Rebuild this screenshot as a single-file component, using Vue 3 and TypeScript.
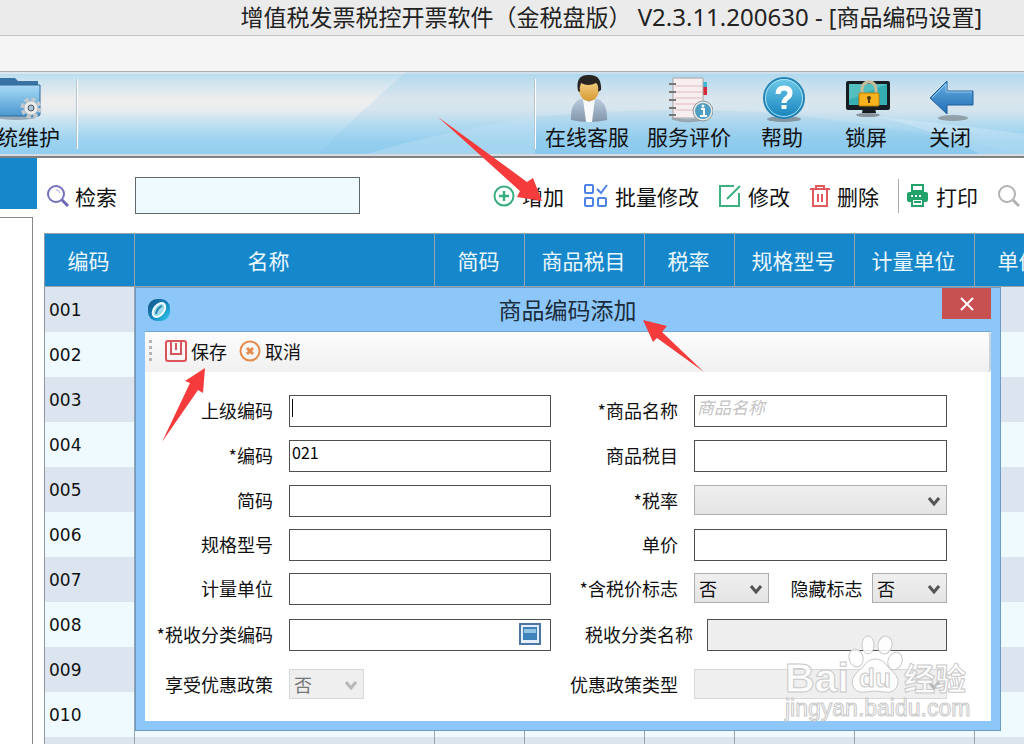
<script setup lang="ts">
import { ref } from 'vue'

interface Column {
  title: string
  width: number
}

const columns: Column[] = [
  { title: '编码', width: 90 },
  { title: '名称', width: 300 },
  { title: '简码', width: 90 },
  { title: '商品税目', width: 120 },
  { title: '税率', width: 90 },
  { title: '规格型号', width: 120 },
  { title: '计量单位', width: 120 },
  { title: '单价', width: 90 },
]
const codes: string[] = Array.from({ length: 11 }, (_, i) => String(i + 1).padStart(3, '0'))

const keyword = ref('')
const parentCode = ref('')
const code = ref('021')
const shortCode = ref('')
const spec = ref('')
const unit = ref('')
const taxClass = ref('')
const name = ref('')
const taxItem = ref('')
const price = ref('')
</script>

<template>
  <div class="app">
    <header class="titlebar">
      <h1>增值税发票税控开票软件（金税盘版）<span class="version"> V2.3.11.200630 - </span>[商品编码设置]</h1>
    </header>
    <div class="menubar"></div>

    <nav class="ribbon">
      <svg class="swoosh" viewBox="0 0 1024 82" preserveAspectRatio="none" aria-hidden="true">
        <path d="M406 0 Q360 40 318 82 H1024 V0Z" fill="#7fc0e8" opacity=".18" />
        <path d="M366 82 Q440 60 535 45 V82Z" fill="#fff" opacity=".25" />
        <path d="M366 82 Q440 60 535 45 Q640 34 760 40 Q880 50 1024 82Z" fill="#5fb2e6" opacity=".12" />
        <path d="M880 45 Q950 52 1024 62 V82 H980 Q940 60 880 45Z" fill="#fff" opacity=".2" />
      </svg>
      <button class="tool maintain" type="button">
        <svg width="48" height="46" viewBox="0 0 48 46" aria-hidden="true">
          <defs>
            <linearGradient id="folder" x1="0" y1="0" x2="0" y2="1">
              <stop offset="0" stop-color="#a9daf6" /><stop offset="1" stop-color="#4a98d0" />
            </linearGradient>
          </defs>
          <ellipse cx="22" cy="42" rx="20" ry="3" fill="#567" opacity=".45" />
          <path d="M1 3h20l3 3h20v33H1z" fill="#3873a3" />
          <path d="M4 10h42v29q0 2-2 2H4z" fill="url(#folder)" stroke="#2e6a9b" />
          <circle cx="37" cy="33" r="8" fill="none" stroke="#c3c9ce" stroke-width="5" stroke-dasharray="4 2.28" />
          <circle cx="37" cy="33" r="7" fill="#e9ebed" stroke="#b4babf" />
          <circle cx="37" cy="33" r="3" fill="#a9c4d9" stroke="#555" />
        </svg>
        <span>系统维护</span>
      </button>
      <i class="divider"></i>
      <div class="ribbon-right">
        <i class="divider"></i>
        <button class="tool" type="button">
          <svg width="48" height="50" viewBox="0 0 48 50" aria-hidden="true">
            <defs>
              <linearGradient id="suit" x1="0" y1="0" x2="0" y2="1">
                <stop offset="0" stop-color="#b9cbdc" /><stop offset="1" stop-color="#8194a9" />
              </linearGradient>
              <linearGradient id="skin" x1="0" y1="0" x2="0" y2="1">
                <stop offset="0" stop-color="#f8d58c" /><stop offset="1" stop-color="#d79a35" />
              </linearGradient>
            </defs>
            <path d="M8 47 Q7 30 17 26 H35 Q45 30 44 47 Q26 51 8 47Z" fill="url(#suit)" />
            <path d="M20 26 L26 29 L32 26 L29 49 H23Z" fill="#f7f9fb" />
            <ellipse cx="26" cy="17" rx="10" ry="11" fill="url(#skin)" />
            <path d="M15 18 Q12 2 25 2 Q39 1 38 17 L35 19 Q36 12 33 10 Q25 14 18 10 Q16 15 17 19Z" fill="#282421" />
          </svg>
          <span>在线客服</span>
        </button>
        <button class="tool" type="button">
          <svg width="48" height="50" viewBox="0 0 48 50" aria-hidden="true">
            <path d="M7 45 Q22 50 38 46" stroke="#888" stroke-width="3" fill="none" opacity=".6" />
            <path d="M38 9h4v5h-4z" fill="#3db8d5" /><path d="M38 14h4v8h-4z" fill="#d5283a" />
            <path d="M8 5h30v40H8z" fill="#f7efef" stroke="#a8a1a2" />
            <path d="M10 13h27M10 19h27M10 25h27M10 31h27M10 37h27" stroke="#dfb9bb" stroke-width="1" />
            <path d="M4 11h7M4 19h7M4 27h7M4 35h7M4 42h7" stroke="#777" stroke-width="2" />
            <circle cx="38" cy="38" r="9" fill="#4f9ec4" stroke="#e8e8e0" stroke-width="2" />
            <circle cx="38" cy="38" r="10" fill="none" stroke="#8b9aa0" />
            <path d="M36 36h3v7M35 43h7" stroke="#fff" stroke-width="2" fill="none" /><circle cx="38" cy="33" r="1.500" fill="#fff" />
          </svg>
          <span>服务评价</span>
        </button>
        <button class="tool" type="button">
          <svg width="48" height="50" viewBox="0 0 48 50" aria-hidden="true">
            <defs>
              <linearGradient id="help" x1="0" y1="0" x2="0" y2="1">
                <stop offset="0" stop-color="#70cbea" /><stop offset="1" stop-color="#1583bd" />
              </linearGradient>
            </defs>
            <ellipse cx="26" cy="46" rx="17" ry="3" fill="#555" opacity=".5" />
            <circle cx="26" cy="25" r="20" fill="url(#help)" stroke="#2383b3" stroke-width="2" />
            <circle cx="26" cy="25" r="18.500" fill="none" stroke="#a9e3f5" />
            <path d="M20 21 Q20 15 26 15 Q32 15 32 20 Q32 23 29 25 Q26 27 26 30" fill="none" stroke="#fff" stroke-width="5" />
            <path d="M23.500 32h5v4h-5z" fill="#fff" />
          </svg>
          <span>帮助</span>
        </button>
        <button class="tool" type="button">
          <svg width="48" height="50" viewBox="0 0 48 50" aria-hidden="true">
            <ellipse cx="26" cy="42" rx="12" ry="2" fill="#444" opacity=".5" />
            <path d="M21 35h12l1 5H20z" fill="#161b20" />
            <rect x="4" y="8" width="44" height="29" rx="2" fill="#171d22" />
            <path d="M7 11h38v21H7z" fill="#35aeb1" />
            <path d="M7 11h38L7 27z" fill="#72cfce" opacity=".5" />
            <path d="M20 21v-4q0-8 7-8t7 8v4" fill="none" stroke="#c6bd98" stroke-width="3" />
            <rect x="17" y="20" width="20" height="13" rx="1" fill="#f7b31d" stroke="#b87c0b" />
            <circle cx="27" cy="25" r="2" fill="#4f3a09" /><path d="M26 25h2v5h-2z" fill="#4f3a09" />
          </svg>
          <span>锁屏</span>
        </button>
        <button class="tool" type="button">
          <svg width="48" height="50" viewBox="0 0 48 50" aria-hidden="true">
            <defs>
              <linearGradient id="back" x1="0" y1="0" x2="0" y2="1">
                <stop offset="0" stop-color="#65ade3" /><stop offset="1" stop-color="#216eb4" />
              </linearGradient>
            </defs>
            <ellipse cx="27" cy="45" rx="15" ry="3" fill="#555" opacity=".45" />
            <path d="M4 25 L21 8 V18 H47 V32 H21 V41Z" fill="url(#back)" stroke="#205d9a" stroke-width="1" />
            <path d="M6 25 L20 11 V19 H46" fill="none" stroke="#93c8ee" />
          </svg>
          <span>关闭</span>
        </button>
      </div>
    </nav>

    <div class="workspace">
      <aside class="side">
        <div class="side-head"></div>
        <div class="side-tree"></div>
      </aside>
      <main class="main">
        <div class="toolbar">
          <label class="search-label" for="keyword">
            <svg width="24" height="24" viewBox="0 0 24 24" aria-hidden="true">
              <circle cx="10" cy="10" r="8" fill="none" stroke="#7470bd" stroke-width="2" />
              <path d="M10 6q3 0 4 3" fill="none" stroke="#a5a2dc" />
              <path d="M16 16l6 6" stroke="#6c68b3" stroke-width="3" />
            </svg>
            检索
          </label>
          <input id="keyword" v-model="keyword" class="search" type="text" />
          <div class="actions">
            <button type="button">
              <svg width="24" height="24" viewBox="0 0 24 24" fill="none" stroke="#39ae7e" aria-hidden="true">
                <circle cx="12" cy="12" r="9.500" stroke-width="2" /><path d="M12 7v10M7 12h10" stroke-width="2.500" />
              </svg>增加
            </button>
            <button type="button">
              <svg width="26" height="24" viewBox="0 0 26 24" fill="none" stroke="#4b83e8" stroke-width="2" aria-hidden="true">
                <rect x="2" y="1" width="8" height="8" rx="1" /><rect x="2" y="14" width="8" height="8" rx="1" />
                <rect x="15" y="14" width="8" height="8" rx="1" /><path d="M14 5l4 4 6-8" />
              </svg>批量修改
            </button>
            <button type="button">
              <svg width="24" height="24" viewBox="0 0 24 24" fill="none" stroke="#3eb181" stroke-width="2" aria-hidden="true">
                <path d="M16 2H2v20h19V9M9 15L22 2" />
              </svg>修改
            </button>
            <button type="button">
              <svg width="22" height="24" viewBox="0 0 22 24" fill="none" stroke="#e15a5f" stroke-width="2" aria-hidden="true">
                <path d="M1 5h20M7 5V2h8v3M4 5v17h14V5M9 10v8M13 10v8" />
              </svg>删除
            </button>
            <i class="rule"></i>
            <button type="button">
              <svg width="24" height="24" viewBox="0 0 24 24" aria-hidden="true">
                <path d="M6 1h11v6H6z" fill="none" stroke="#23a36a" stroke-width="2" />
                <rect x="1" y="8" width="21" height="10" rx="2" fill="#23a36a" />
                <path d="M6 15h11v7H6z" fill="#fff" stroke="#23a36a" stroke-width="2" />
                <path d="M5 12h2M9 12h2M13 12h2" stroke="#fff" stroke-width="2" /><path d="M8 18h7" stroke="#23a36a" stroke-width="2" />
              </svg>打印
            </button>
            <button type="button" aria-label="查找">
              <svg width="24" height="24" viewBox="0 0 24 24" fill="none" stroke="#b2b2b2" aria-hidden="true">
                <circle cx="10" cy="10" r="8" stroke-width="2" /><path d="M16 16l6 6" stroke-width="3" />
              </svg>
            </button>
          </div>
        </div>

        <div class="table-area">
          <table>
            <colgroup>
              <col v-for="c in columns" :key="c.title" :style="{ width: c.width + 'px' }" />
            </colgroup>
            <thead>
              <tr><th v-for="c in columns" :key="c.title" scope="col">{{ c.title }}</th></tr>
            </thead>
            <tbody>
              <tr v-for="row in codes" :key="row">
                <td>{{ row }}</td>
                <td v-for="n in columns.length - 1" :key="n"></td>
              </tr>
            </tbody>
          </table>

          <section class="dialog" role="dialog" aria-labelledby="dialog-title">
            <div class="dialog-head">
              <svg class="logo" width="24" height="24" viewBox="0 0 24 24" aria-hidden="true">
                <defs>
                  <linearGradient id="orb" x1="0" y1="0" x2="1" y2="1">
                    <stop offset="0" stop-color="#174f80" /><stop offset=".6" stop-color="#128fc8" /><stop offset="1" stop-color="#3cd0ed" />
                  </linearGradient>
                </defs>
                <rect x="1" y="1" width="22" height="22" rx="9" fill="url(#orb)" />
                <ellipse cx="12" cy="12" rx="5" ry="8" transform="rotate(38 12 12)" fill="#9edbed" stroke="#f2fcff" stroke-width="2" />
                <path d="M9 16q1-6 6-8" fill="none" stroke="#2887ae" stroke-width="2" />
              </svg>
              <h2 id="dialog-title">商品编码添加</h2>
              <button class="close" type="button" aria-label="关闭窗口">
                <svg width="14" height="14" viewBox="0 0 14 14" aria-hidden="true"><path d="M1 1l12 12M13 1L1 13" stroke="#fff" stroke-width="2" /></svg>
              </button>
            </div>

            <div class="dialog-body">
              <div class="dialog-tools">
                <svg width="4" height="24" viewBox="0 0 4 24" fill="#b4b4bc" aria-hidden="true">
                  <path d="M0 1h3v3H0zM0 7h3v3H0zM0 13h3v3H0zM0 19h3v3H0z" />
                </svg>
                <button type="button">
                  <svg width="22" height="22" viewBox="0 0 22 22" fill="none" stroke="#da545b" stroke-width="2" aria-hidden="true">
                    <path d="M3 1h16q2 0 2 2v16q0 2-2 2H3q-2 0-2-2V3q0-2 2-2zM6 2v12h10V2M11 3v7" />
                  </svg>保存
                </button>
                <button type="button">
                  <svg width="22" height="22" viewBox="0 0 22 22" fill="none" stroke="#e58b4c" aria-hidden="true">
                    <circle cx="11" cy="11" r="9.500" stroke-width="2" /><path d="M8 8l6 6M14 8l-6 6" stroke-width="3" />
                  </svg>取消
                </button>
              </div>

              <form class="form" @submit.prevent>
                <label for="parent">上级编码</label>
                <div class="field caret"><input id="parent" v-model="parentCode" type="text" /></div>
                <label for="name">*商品名称</label>
                <div class="field"><input id="name" v-model="name" type="text" placeholder="商品名称" /></div>

                <label for="code">*编码</label>
                <div class="field"><input id="code" v-model="code" type="text" /></div>
                <label for="taxitem">商品税目</label>
                <div class="field"><input id="taxitem" v-model="taxItem" type="text" /></div>

                <label for="short">简码</label>
                <div class="field"><input id="short" v-model="shortCode" type="text" /></div>
                <label for="rate">*税率</label>
                <div class="field pick">
                  <select id="rate"><option value=""></option></select>
                  <svg width="12" height="9" viewBox="0 0 12 9" aria-hidden="true"><path d="M1 1l5 6 5-6" /></svg>
                </div>

                <label for="spec">规格型号</label>
                <div class="field"><input id="spec" v-model="spec" type="text" /></div>
                <label for="price">单价</label>
                <div class="field"><input id="price" v-model="price" type="text" /></div>

                <label for="unit">计量单位</label>
                <div class="field"><input id="unit" v-model="unit" type="text" /></div>
                <label for="included">*含税价标志</label>
                <div class="pair">
                  <div class="field pick small">
                    <select id="included"><option>否</option><option>是</option></select>
                    <svg width="12" height="9" viewBox="0 0 12 9" aria-hidden="true"><path d="M1 1l5 6 5-6" /></svg>
                  </div>
                  <label for="hidden">隐藏标志</label>
                  <div class="field pick small">
                    <select id="hidden"><option>否</option><option>是</option></select>
                    <svg width="12" height="9" viewBox="0 0 12 9" aria-hidden="true"><path d="M1 1l5 6 5-6" /></svg>
                  </div>
                </div>

                <label for="class">*税收分类编码</label>
                <div class="field">
                  <input id="class" v-model="taxClass" type="text" />
                  <button class="browse" type="button" aria-label="选择税收分类">
                    <svg width="22" height="22" viewBox="0 0 22 22" aria-hidden="true">
                      <rect x="1" y="1" width="20" height="20" fill="#e3f0fb" stroke="#4c76a5" stroke-width="2" />
                      <path d="M4 4h14v13H4z" fill="#3e83b9" /><path d="M5 6h12v4H5z" fill="#91c3e2" />
                    </svg>
                  </button>
                </div>
                <div class="wide">
                  <label for="classname">税收分类名称</label>
                  <div class="field"><input id="classname" type="text" disabled /></div>
                </div>

                <label for="policy">享受优惠政策</label>
                <div class="field pick small">
                  <select id="policy" disabled><option>否</option></select>
                  <svg width="12" height="9" viewBox="0 0 12 9" aria-hidden="true"><path d="M1 1l5 6 5-6" /></svg>
                </div>
                <label for="policytype">优惠政策类型</label>
                <div class="field pick">
                  <select id="policytype" disabled><option value=""></option></select>
                  <svg width="12" height="9" viewBox="0 0 12 9" aria-hidden="true"><path d="M1 1l5 6 5-6" /></svg>
                </div>
              </form>
            </div>
          </section>
        </div>
      </main>
    </div>

    <svg class="marks" width="1024" height="744" viewBox="0 0 1024 744" aria-hidden="true">
      <g fill="#f53b3b">
        <path d="M438 117 L527 182 L533 178 L542 201 L517 197 L520 191Z" />
        <path d="M643 320 L667 326 L662 332 L704 372 L657 338 L653 342Z" />
        <path d="M205 368 L185 381 L190 383 L162 442 L198 390 L203 393Z" />
      </g>
      <g class="watermark" fill="#fff" fill-opacity=".85" stroke="#c9c9c9" stroke-width="1">
        <text x="785" y="692" font-size="41" font-weight="700">Bai</text>
        <ellipse cx="856" cy="658" rx="7" ry="9" transform="rotate(-15 856 658)" />
        <ellipse cx="868" cy="645" rx="6" ry="9" />
        <ellipse cx="885" cy="645" rx="7" ry="9" transform="rotate(12 885 645)" />
        <ellipse cx="895" cy="661" rx="7" ry="9" transform="rotate(20 895 661)" />
        <path d="M875 659 Q883 659 888 667 Q899 676 898 683 Q896 694 884 692 Q875 690 866 692 Q854 694 852 683 Q852 675 863 667 Q868 659 875 659Z" />
        <text x="859" y="687" font-size="26" font-weight="700">du</text>
        <text class="cjk" x="904" y="690" font-size="31" font-weight="700">经验</text>
        <text x="785" y="716" font-size="23">jingyan.baidu.com</text>
      </g>
    </svg>
  </div>
</template>

<style>
body {
  margin: 0;
}
</style>

<style scoped>
.app {
  position: relative;
  display: flex;
  flex-direction: column;
  height: 100vh;
  overflow: hidden;
  background: #fff;
  color: #111;
  font-family: "Noto Sans CJK SC", sans-serif;
  font-size: 21px;
}
.app *,
.app *::before {
  box-sizing: border-box;
}
button {
  border: 0;
  padding: 0;
  background: none;
  color: inherit;
  font: inherit;
  white-space: nowrap;
}
svg {
  flex: none;
}
.titlebar {
  flex: none;
  height: 36px;
  padding-right: 42px;
  border-bottom: 1px solid #c6c6c6;
  background: #ebebeb;
  text-align: right;
}
h1 {
  margin: 0;
  font-family: "Noto Sans", "Noto Sans CJK SC", sans-serif;
  font-size: 23px;
  font-weight: 400;
  line-height: 34px;
  white-space: pre;
  color: #222;
}
.version {
  font-size: 24px;
}
.menubar {
  flex: none;
  height: 36px;
  border-bottom: 1px solid #a9adb0;
  background: #f5f5f5;
}
.ribbon {
  position: relative;
  display: flex;
  flex: none;
  height: 86px;
  border-bottom: 2px solid #828282;
  box-shadow: inset 0 -2px #d5dde2, inset 0 2px #dce7ed;
  background: linear-gradient(#b5dcf0 0, #cfe4ef 10px, #efeeee 28px, #e8ecef 38px, #bfe0f2 52px, #9dd3f0 68px, #92cdf0 84px);
}
.swoosh {
  position: absolute;
  inset: 0;
  width: 100%;
  height: 82px;
}
.divider {
  position: relative;
  flex: none;
  width: 2px;
  height: 70px;
  margin-top: 7px;
  border-left: 1px solid #b4c4cd;
  background: #fff;
}
.ribbon-right {
  position: relative;
  display: flex;
  margin-left: auto;
  padding-right: 32px;
}
.tool {
  position: relative;
  display: flex;
  flex-direction: column;
  align-items: center;
  min-width: 84px;
  padding: 1px 9px 0;
  line-height: 26px;
}
.tool svg {
  height: 50px;
}
.maintain {
  width: 102px;
  margin: 0 7px 0 -33px;
}
.workspace {
  display: flex;
  flex: 1;
  min-height: 0;
}
.side {
  display: flex;
  flex: none;
  flex-direction: column;
  width: 44px;
}
.side-head {
  height: 51px;
  margin-right: 7px;
  background: #1787cb;
}
.side-tree {
  flex: 1;
  margin: 8px 11px 0 0;
  border: solid #85898c;
  border-width: 1px 1px 0 0;
}
.main {
  display: flex;
  flex: 1;
  flex-direction: column;
  min-width: 0;
}
.toolbar {
  display: flex;
  flex: none;
  align-items: center;
  height: 75px;
  padding: 0 3px 0 2px;
}
.search-label,
.actions,
.actions button {
  display: flex;
  align-items: center;
  line-height: 28px;
}
.search-label {
  flex: none;
  gap: 5px;
  width: 89px;
}
.search {
  width: 225px;
  height: 37px;
  padding: 0 6px;
  border: 1px solid #5f686c;
  background: #effaff;
  font: inherit;
}
.actions {
  gap: 19px;
  margin-left: auto;
}
.actions button {
  gap: 6px;
}
.rule {
  width: 1px;
  height: 34px;
  margin-right: -12px;
  background: #aaa;
}
.table-area {
  position: relative;
  flex: 1;
  min-height: 0;
}
table {
  width: 1021px;
  border-left: 1px solid #8b9aa3;
  border-spacing: 0;
  table-layout: fixed;
}
th {
  height: 54px;
  padding: 0 2px 0 0;
  border: solid #98a3aa;
  border-width: 1px 1px 1px 0;
  background: #1787cb;
  color: #e9f7ff;
  font-weight: 400;
}
th:nth-child(2) {
  padding-right: 32px;
}
td {
  height: 45px;
  padding: 0 4px;
  border-right: 1px solid #98a3aa;
  font-family: "DejaVu Sans", sans-serif;
  font-size: 17px;
}
tbody tr:nth-child(odd) {
  background: #dce5ef;
}
tbody tr:nth-child(even) {
  background: #effaff;
}
.dialog {
  position: absolute;
  top: 54px;
  right: 23px;
  left: 91px;
  padding: 0 9px 9px;
  border: 1px solid #6b9cc8;
  background: #8dc7fa;
}
.dialog-head {
  display: flex;
  align-items: center;
  height: 43px;
}
.logo {
  margin: 0 0 0 2px;
}
h2 {
  flex: 1;
  margin: 0 0 0 22px;
  font-size: 23px;
  font-weight: 400;
  line-height: 43px;
  text-align: center;
  color: #1b2c3a;
}
.close {
  display: flex;
  align-items: center;
  justify-content: center;
  align-self: flex-start;
  width: 49px;
  height: 31px;
  background: #c75050;
}
.dialog-body {
  border-top: 1px solid #72a7d5;
  background: #fff;
  font-size: 18px;
}
.dialog-tools {
  display: flex;
  align-items: center;
  gap: 12px;
  height: 40px;
  padding: 0 0 2px 4px;
  border-right: 2px solid #c9d3dc;
  border-radius: 0 3px 3px 0;
  background: linear-gradient(#fdfdfd, #f0f0f0);
}
.dialog-tools button {
  display: flex;
  align-items: center;
  gap: 4px;
  line-height: 24px;
}
.form {
  display: grid;
  grid-template-columns: 127px minmax(0, 262fr) 111px minmax(0, 253fr);
  grid-template-rows: 45px 45px 44px 44px 46px 50px 31px;
  column-gap: 16px;
  padding: 23px 44px 21px 1px;
}
.form label {
  line-height: 30px;
  text-align: right;
  white-space: nowrap;
}
.field {
  position: relative;
  height: 32px;
}
.field input {
  display: block;
  width: 100%;
  height: 100%;
  padding: 0 2px 8px;
  border: 1px solid #505050;
  border-radius: 0;
  background: #fff;
  font-family: "Noto Sans CJK SC", sans-serif;
  font-size: 16px;
}
.field input:disabled {
  background: #eee;
}
.field input::placeholder {
  color: #c4c4c4;
  font-size: 17px;
  font-style: italic;
}
.caret::before {
  content: "";
  position: absolute;
  top: 4px;
  left: 3px;
  width: 1px;
  height: 18px;
  background: #111;
}
.pick {
  height: 30px;
}
.pick select {
  appearance: none;
  display: block;
  width: 100%;
  height: 100%;
  padding: 0 4px;
  border: 1px solid #adadad;
  border-radius: 0;
  background: linear-gradient(#f0f0f0, #e4e4e4);
  color: #111;
  font: inherit;
  opacity: 1;
}
.pick svg {
  position: absolute;
  top: 12px;
  right: 7px;
  fill: none;
  stroke: #555;
  stroke-width: 3;
  pointer-events: none;
}
.pick select:disabled {
  border-color: #d8d8d8;
  background: #efefef;
  color: #777;
}
.pick select:disabled + svg {
  stroke: #b8b8b8;
}
.small {
  width: 75px;
}
.pair {
  display: flex;
  justify-content: space-between;
}
.pair label {
  margin-left: 12px;
}
.wide {
  display: flex;
  grid-column: 3 / 5;
  gap: 14px;
}
.wide label {
  width: 126px;
}
.wide .field {
  flex: 1;
}
.browse {
  position: absolute;
  top: 4px;
  right: 10px;
  line-height: 0;
}
.marks {
  position: absolute;
  top: 0;
  left: 0;
  pointer-events: none;
}
.watermark {
  font-family: "Liberation Sans", sans-serif;
}
.cjk {
  font-family: "Noto Sans CJK SC", sans-serif;
}
</style>
